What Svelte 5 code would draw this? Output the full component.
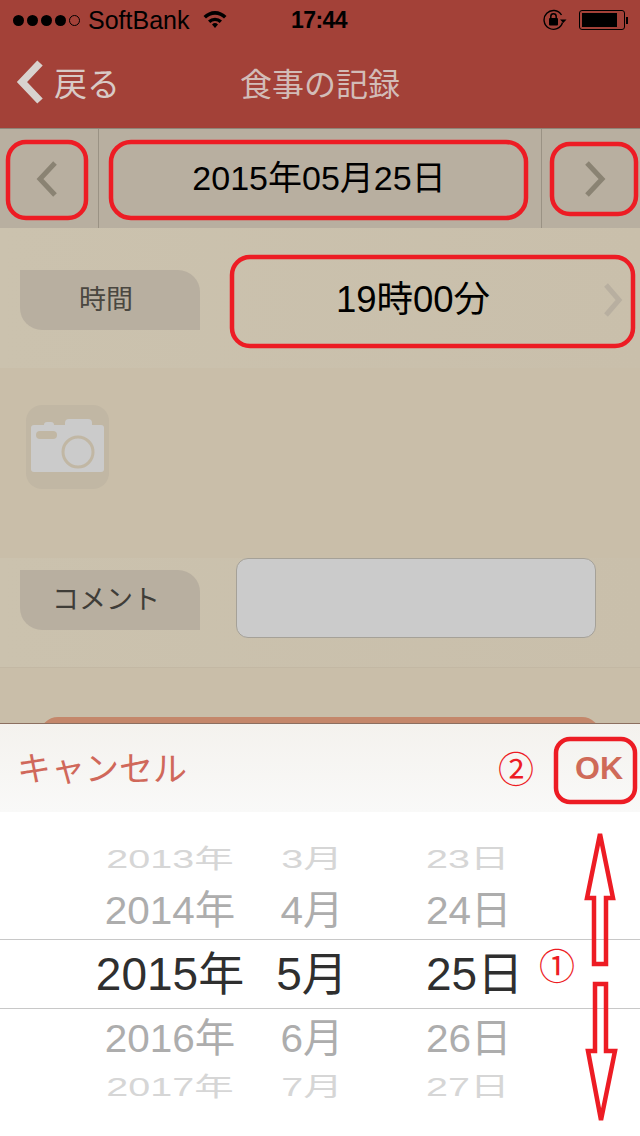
<script>
  const rows = [
    { cls: 'far', y: '2013年', m: '3月', d: '23日' },
    { cls: 'near', y: '2014年', m: '4月', d: '24日' },
    { cls: 'now', y: '2015年', m: '5月', d: '25日' },
    { cls: 'near low', y: '2016年', m: '6月', d: '26日' },
    { cls: 'far', y: '2017年', m: '7月', d: '27日' }
  ];

  // red hand-drawn marks that sit over the screenshot
  const boxes = [
    { x: 8, y: 142, w: 78, h: 76, r: 18 },
    { x: 111, y: 142, w: 415, h: 76, r: 20 },
    { x: 552, y: 144, w: 84, h: 70, r: 18 },
    { x: 232, y: 257, w: 401, h: 89, r: 18 },
    { x: 556, y: 739, w: 79, h: 63, r: 14 }
  ];
</script>

<div class="screen">
  <header class="top">
    <div class="status">
      <span class="dot"></span><span class="dot"></span><span class="dot"></span><span class="dot"></span><span class="dot off"></span>
      <span class="carrier">SoftBank</span>
      <svg class="wifi" width="26" height="20" viewBox="0 0 26 20">
        <path d="M1.5 7 A16 16 0 0 1 24.5 7 L22 9.6 A12.6 12.6 0 0 0 4 9.6Z" />
        <path d="M6 11.5 A10 10 0 0 1 20 11.5 L17.7 13.9 A6.8 6.8 0 0 0 8.3 13.9Z" />
        <path d="M10 15.5 A4.4 4.4 0 0 1 16 15.5 L13 19Z" />
      </svg>
      <span class="clock">17:44</span>
      <svg class="lock" width="24" height="22" viewBox="0 0 24 22">
        <path d="M19.5 13.5 A9.4 9.4 0 1 1 18.5 6" fill="none" stroke="#000" stroke-width="1.4" />
        <path d="M17 10.5 h6.5 l-3.2 3.4Z" />
        <rect x="6" y="9" width="9" height="7.5" rx="1" />
        <path d="M7.8 9.5 V7.5 a2.7 2.7 0 0 1 5.4 0 V9.5" fill="none" stroke="#000" stroke-width="1.5" />
      </svg>
      <span class="battery"><span class="charge"></span></span>
      <span class="nub"></span>
    </div>
    <nav class="bar">
      <svg class="back" width="28" height="44" viewBox="0 0 28 44">
        <path d="M24 3 L6 22 L24 41" fill="none" stroke="#d8d2ce" stroke-width="7.5" />
      </svg>
      <span class="back-label">戻る</span>
      <span class="title">食事の記録</span>
    </nav>
  </header>

  <div class="dates">
    <div class="step prev">
      <svg width="22" height="36" viewBox="0 0 22 36"><path d="M19 2 L4 18 L19 34" fill="none" stroke="#8a8373" stroke-width="5" /></svg>
    </div>
    <div class="day">2015年05月25日</div>
    <div class="step next">
      <svg width="22" height="36" viewBox="0 0 22 36"><path d="M3 2 L18 18 L3 34" fill="none" stroke="#8a8373" stroke-width="5" /></svg>
    </div>
  </div>

  <section class="form">
    <div class="row time">
      <div class="label">時間</div>
      <div class="value">19時00分</div>
      <svg class="more" width="20" height="34" viewBox="0 0 20 34"><path d="M3 2 L16 17 L3 32" fill="none" stroke="#b8afa0" stroke-width="5" /></svg>
    </div>

    <div class="photo">
      <svg width="83" height="84" viewBox="0 0 83 84">
        <rect width="83" height="84" rx="16" fill="#c1b7a4" />
        <rect x="5" y="20" width="73" height="47" rx="3" fill="#cbcbcb" />
        <rect x="18" y="17" width="10" height="8" rx="3" fill="#cbcbcb" />
        <rect x="39" y="14" width="27" height="10" rx="4" fill="#cbcbcb" />
        <rect x="10" y="26" width="21" height="8" rx="4" fill="#c1b7a4" />
        <circle cx="52" cy="47" r="15" fill="#cbcbcb" stroke="#c1b7a4" stroke-width="3" />
      </svg>
    </div>

    <div class="row comment">
      <div class="label">コメント</div>
      <div class="input"></div>
    </div>

    <div class="save"></div>
  </section>

  <section class="sheet">
    <div class="tools">
      <span class="cancel">キャンセル</span>
      <span class="num two">②</span>
      <span class="ok">OK</span>
    </div>
    <div class="picker">
      {#each rows as row}
        <div class="line {row.cls}">
          <span class="y">{row.y}</span>
          <span class="m">{row.m}</span>
          <span class="d">{row.d}</span>
        </div>
      {/each}
      <span class="num one">①</span>
    </div>
  </section>

  <svg class="marks" width="640" height="1136" viewBox="0 0 640 1136">
    {#each boxes as b}
      <rect x={b.x} y={b.y} width={b.w} height={b.h} rx={b.r} />
    {/each}
    <polygon points="600,834 613,898 606,898 606,964 594,964 594,898 587,898" />
    <polygon points="595,984 606,984 606,1051 615,1051 601,1120 588,1051 595,1051" />
  </svg>
</div>

<style>
  :global(body) {
    margin: 0;
    background: #fff;
  }
  .screen {
    position: relative;
    width: 640px;
    height: 1136px;
    overflow: hidden;
    display: flex;
    flex-direction: column;
    background: #c9bea9;
    font-family: "Liberation Sans", "Noto Sans CJK JP", sans-serif;
  }
  .top {
    height: 128px;
    background: #a34138;
    flex: none;
  }
  .status {
    height: 40px;
    display: flex;
    align-items: center;
    padding-left: 13px;
    color: #000;
    box-sizing: border-box;
  }
  .dot {
    width: 11px;
    height: 11px;
    border-radius: 50%;
    background: #000;
    margin-right: 3px;
    box-sizing: border-box;
  }
  .dot.off {
    background: none;
    border: 1px solid #000;
  }
  .carrier {
    font-size: 25px;
    margin-left: 5px;
    width: 114px;
  }
  .wifi {
    fill: #000;
    margin-top: -2px;
  }
  .clock {
    font-size: 23px;
    font-weight: 700;
    letter-spacing: -0.6px;
    margin-left: 63px;
    width: 252px;
  }
  .lock {
    fill: #000;
  }
  .battery {
    width: 46px;
    height: 20px;
    border: 1px solid #000;
    border-radius: 3px;
    margin-left: 12px;
    padding: 2px;
    box-sizing: border-box;
  }
  .charge {
    display: block;
    width: 35px;
    height: 14px;
    background: #000;
  }
  .nub {
    width: 2px;
    height: 7px;
    background: #000;
    margin-left: 1px;
  }
  .bar {
    position: relative;
    height: 88px;
    display: flex;
    align-items: center;
    padding-left: 16px;
    padding-bottom: 4px;
    box-sizing: border-box;
  }
  .back-label {
    font-size: 33px;
    color: #d8cac6;
    margin-left: 10px;
  }
  .title {
    font-size: 32px;
    color: #d2bcb7;
    margin-left: 120px;
  }
  .dates {
    height: 100px;
    flex: none;
    display: flex;
    background: #b8afa0;
    border-top: 1px solid #8f8578;
    box-sizing: border-box;
  }
  .step {
    width: 99px;
    display: flex;
    align-items: center;
    box-sizing: border-box;
  }
  .prev {
    padding-left: 36px;
    border-right: 1px solid #9a9284;
  }
  .next {
    padding-left: 42px;
    border-left: 1px solid #9a9284;
  }
  .day {
    flex: 1;
    display: flex;
    align-items: center;
    justify-content: center;
    padding: 0 2px 6px 0;
    font-size: 34px;
    color: #000;
  }
  .form {
    flex: 1;
    display: flex;
    flex-direction: column;
  }
  .row {
    display: flex;
    align-items: center;
    padding-left: 20px;
  }
  .label {
    width: 180px;
    height: 60px;
    flex: none;
    display: flex;
    align-items: center;
    justify-content: center;
    box-sizing: border-box;
    padding: 0 8px 6px 0;
    background: #b8afa0;
    border-radius: 0 22px 0 22px;
    font-size: 27px;
    color: #4a4740;
  }
  .time {
    height: 140px;
    padding-top: 4px;
    box-sizing: border-box;
    background: linear-gradient(90deg, #cbc2ae, #c9bfab);
  }
  .value {
    width: 366px;
    margin-left: 30px;
    padding-bottom: 8px;
    text-align: center;
    font-size: 36.5px;
    color: #000;
  }
  .more {
    margin-left: 7px;
  }
  .photo {
    height: 84px;
    padding: 37px 0 0 26px;
    margin-bottom: 69px;
  }
  .comment {
    height: 80px;
    padding-bottom: 29px;
    align-items: flex-start;
    border-bottom: 1px solid #c3b8a4;
    background: linear-gradient(90deg, #cbc2ae, #c9bfab);
  }
  .comment .label {
    margin-top: 12px;
    color: #3f3d38;
  }
  .input {
    width: 360px;
    height: 80px;
    margin-left: 36px;
    box-sizing: border-box;
    background: #cbcbcb;
    border: 1px solid #a5a198;
    border-radius: 12px;
  }
  .save {
    height: 60px;
    margin: 49px 40px 0;
    background: #c4876b;
    border-radius: 18px 18px 0 0;
  }
  .sheet {
    position: absolute;
    left: 0;
    right: 0;
    bottom: 0;
    height: 413px;
    box-sizing: border-box;
    background: #fff;
    border-top: 1px solid #8c6f60;
  }
  .tools {
    height: 88px;
    display: flex;
    align-items: center;
    padding-left: 17px;
    background: linear-gradient(#f4f2ee, #f9f9f8);
    color: #d0685a;
  }
  .cancel {
    font-size: 34px;
    width: 481px;
    margin-bottom: 4px;
  }
  .ok {
    font-size: 32px;
    font-weight: 700;
    margin-left: 41px;
    color: #cf6a58;
  }
  .num {
    color: #ed1c24;
    font-size: 36px;
    line-height: 1;
    font-family: "Noto Sans CJK JP", sans-serif;
  }
  .two {
    margin-bottom: 2px;
  }
  .picker {
    position: relative;
    padding-top: 23px;
    color: #2f2f2f;
  }
  .line {
    display: grid;
    grid-template-columns: 200px 84px 1fr;
    padding-left: 70px;
    box-sizing: border-box;
    align-items: center;
    line-height: 1;
    white-space: nowrap;
  }
  .y, .m {
    text-align: center;
  }
  .d {
    padding-left: 72px;
  }
  .far {
    height: 50px;
    font-size: 39.5px;
    color: #d6d6d6;
  }
  .far span {
    transform: scaleY(0.66);
  }
  .near {
    height: 54px;
    padding-bottom: 3px;
    font-size: 40.5px;
    color: #adadad;
  }
  .near.low {
    padding: 5px 0 0 70px;
  }
  .near span {
    transform: scaleY(0.97);
  }
  .now {
    height: 70px;
    padding-bottom: 1px;
    font-size: 46px;
    border-top: 1px solid #c8c8c8;
    border-bottom: 1px solid #c8c8c8;
  }
  .one {
    position: absolute;
    left: 539px;
    top: 134px;
  }
  .marks {
    position: absolute;
    left: 0;
    top: 0;
    pointer-events: none;
    fill: none;
    stroke: #ed1c24;
    stroke-width: 4.5;
  }
</style>
